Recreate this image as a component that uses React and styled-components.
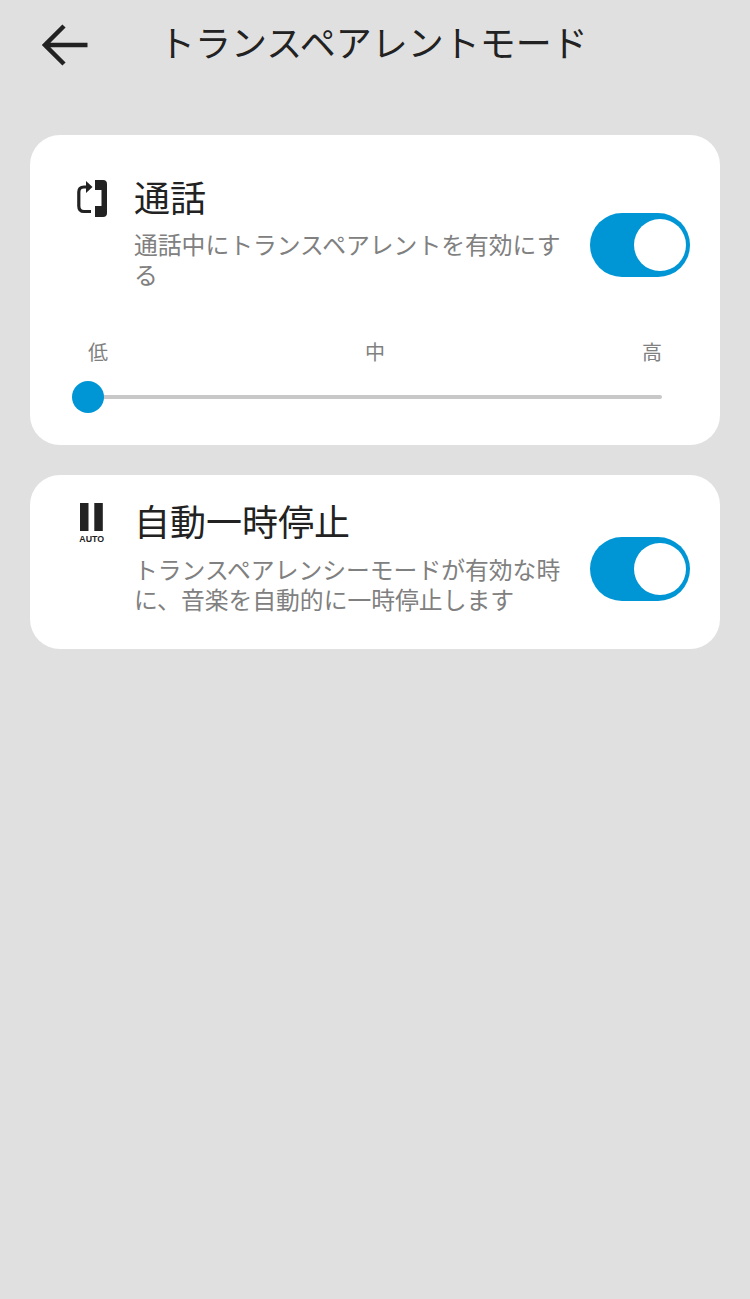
import React from "react";
import styled, { createGlobalStyle } from "styled-components";

const GlobalStyle = createGlobalStyle`
  html, body {
    margin: 0;
    padding: 0;
    background: #e0e0e0;
  }
  body {
    font-family: "Noto Sans CJK JP", "Noto Sans", sans-serif;
  }
`;

const Page = styled.div`
  width: 750px;
  height: 1299px;
  padding: 0 30px;
  box-sizing: border-box;
  background: #e0e0e0;
  overflow: hidden;
`;

const Header = styled.header`
  display: flex;
  align-items: flex-start;
  height: 135px;
  box-sizing: border-box;
  padding: 19px 0 0 12px;
`;

const BackIcon = styled.svg`
  width: 48px;
  height: 44px;
  margin-top: 4px;
  flex: none;
`;

const Title = styled.h1`
  margin: 0 0 0 69px;
  font-size: 36px;
  font-weight: 400;
  line-height: 44px;
  color: #222222;
  white-space: nowrap;
`;

const Card = styled.section`
  background: #ffffff;
  border-radius: 30px;
  margin-bottom: 30px;
  padding: ${(p) => p.$pad};
`;

const Row = styled.div`
  display: flex;
  align-items: flex-start;
`;

const IconSlot = styled.div`
  width: 62px;
  flex: none;
  padding-top: ${(p) => p.$top}px;
  padding-left: 2px;
  box-sizing: border-box;
`;

const Text = styled.div`
  width: 456px;
  flex: none;
`;

const ItemTitle = styled.div`
  font-size: 36px;
  line-height: 48px;
  margin-bottom: ${(p) => p.$gap}px;
  color: #222222;
`;

const ItemDesc = styled.div`
  font-size: 23.8px;
  line-height: 30px;
  color: #808080;
  width: 432px;
`;

const Toggle = styled.div`
  width: 100px;
  height: 64px;
  margin-top: 41px;
  border-radius: 32px;
  background: #0096d6;
  display: flex;
  align-items: center;
  justify-content: flex-end;
  padding-right: 4px;
  box-sizing: border-box;
  flex: none;
`;

const Knob = styled.div`
  width: 52px;
  height: 52px;
  border-radius: 50%;
  background: #ffffff;
`;

const Levels = styled.div`
  display: flex;
  justify-content: space-between;
  margin: 48px 28px 0 16px;
  font-size: 20px;
  line-height: 30px;
  color: #808080;
`;

const Track = styled.div`
  position: relative;
  height: 4px;
  margin: 28px 28px 0 16px;
  border-radius: 2px;
  background: #c8c8c8;
`;

const Thumb = styled.div`
  position: absolute;
  left: -16px;
  top: -14px;
  width: 32px;
  height: 32px;
  border-radius: 50%;
  background: #0096d6;
`;

const AutoIcon = styled.svg`
  display: block;
  width: 34px;
  height: 42px;
`;

const AutoLabel = styled.text`
  font-family: "Liberation Sans", sans-serif;
  font-size: 8.8px;
  font-weight: 700;
  fill: #222222;
`;

const CallIcon = styled.svg`
  display: block;
  width: 34px;
  height: 40px;
`;

export default function App() {
  return (
    <>
      <GlobalStyle />
      <Page>
        <Header>
          <BackIcon viewBox="0 0 48 44">
            <path
              d="M22 3 L3 22 L22 41 M3 22 H45.5"
              fill="none"
              stroke="#222222"
              strokeWidth="4.5"
            />
          </BackIcon>
          <Title>トランスペアレントモード</Title>
        </Header>

        <Card $pad="37px 30px 46px 42px">
          <Row>
            <IconSlot $top={8}>
              <CallIcon viewBox="0 0 34 40">
                <path
                  d="M13 7 H10 Q4.8 7 4.8 12 V26 Q4.8 31.5 10 31.5 H17"
                  fill="none"
                  stroke="#222222"
                  strokeWidth="3.2"
                />
                <path d="M12 1 L18.5 7 L12 13 Z" fill="#222222" />
                <path
                  d="M21 0 H29 Q33 0 33 4 V33 Q33 37 29 37 H21 V26 H27.5 V10 H21 Z"
                  fill="#222222"
                />
              </CallIcon>
            </IconSlot>
            <Text>
              <ItemTitle $gap={9}>通話</ItemTitle>
              <ItemDesc>通話中にトランスペアレントを有効にする</ItemDesc>
            </Text>
            <Toggle>
              <Knob />
            </Toggle>
          </Row>
          <Levels>
            <span>低</span>
            <span>中</span>
            <span>高</span>
          </Levels>
          <Track>
            <Thumb />
          </Track>
        </Card>

        <Card $pad="21px 30px 35px 42px">
          <Row>
            <IconSlot $top={6}>
              <AutoIcon viewBox="0 0 34 42">
                <rect x="6" y="1" width="8.5" height="28" fill="#222222" />
                <rect x="20.3" y="1" width="8.5" height="28" fill="#222222" />
                <AutoLabel x="17.7" y="39.5" textAnchor="middle">
                  AUTO
                </AutoLabel>
              </AutoIcon>
            </IconSlot>
            <Text>
              <ItemTitle $gap={10}>自動一時停止</ItemTitle>
              <ItemDesc>
                トランスペアレンシーモードが有効な時に、音楽を自動的に一時停止します
              </ItemDesc>
            </Text>
            <Toggle>
              <Knob />
            </Toggle>
          </Row>
        </Card>
      </Page>
    </>
  );
}
